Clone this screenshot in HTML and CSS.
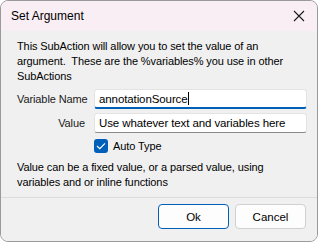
FILE: index.html
```html
<!DOCTYPE html>
<html lang="en">
<head>
    <meta charset="UTF-8">
    <meta name="viewport" content="width=device-width, initial-scale=1.0">
    <title>Set Argument</title>
    <link rel="stylesheet" href="styles.css">
</head>
<body>

    <div class="window">
        <div class="titlebar">
            <span class="title">Set Argument</span>
            <svg class="close" width="12" height="12" viewBox="0 0 12 12">
                <path d="M1 1 L11 11 M11 1 L1 11" stroke="#1a1a1a" stroke-width="1.1" fill="none"/>
            </svg>
        </div>

        <div class="content">
            <p class="intro">This SubAction will allow you to set the value of an argument.&nbsp; These are the %variables% you use in other SubActions</p>

            <div class="form">
                <label class="field-label" for="var-name">Variable Name</label>
                <div class="input focused">
                    <span id="var-name">annotationSource</span><span class="caret"></span>
                </div>

                <label class="field-label" for="var-value">Value</label>
                <div class="input">
                    <span id="var-value">Use whatever text and variables here</span>
                </div>

                <span></span>
                <div class="check-row">
                    <span class="checkbox">
                        <svg width="10" height="8" viewBox="0 0 10 8">
                            <path d="M1 4 L3.8 6.6 L9 1.3" stroke="#ffffff" stroke-width="1.2" fill="none"/>
                        </svg>
                    </span>
                    <span>Auto Type</span>
                </div>
            </div>

            <p class="note">Value can be a fixed value, or a parsed value, using variables and or inline functions</p>
        </div>

        <div class="footer">
            <button class="btn default">Ok</button>
            <button class="btn">Cancel</button>
        </div>
    </div>

</body>
</html>
```

FILE: styles.css
```css
* {
    box-sizing: border-box;
}

body {
    margin: 0;
    background-color: #ffffff;
    font-family: "Liberation Sans", Arial, sans-serif;
    font-size: 11px;
    letter-spacing: -0.1px;
    color: #000000;
}

.window {
    width: 318px;
    height: 242px;
    border: 1px solid #9a9a9a;
    border-radius: 8px;
    overflow: hidden;
    background-color: #f0f0f0;
    display: flex;
    flex-direction: column;
}

.titlebar {
    height: 30px;
    flex-shrink: 0;
    background-color: #f9eef4;
    display: flex;
    align-items: center;
    justify-content: space-between;
    padding: 0 12px 0 10px;
}

.title {
    font-size: 12px;
    letter-spacing: 0;
    color: #000000;
}

.content {
    padding: 8px 10px 0 16px;
    flex: 1;
}

.intro {
    margin: 0;
    line-height: 15px;
}

.form {
    display: grid;
    grid-template-columns: 68px 213px;
    column-gap: 9px;
    row-gap: 4px;
    align-items: center;
    margin-top: 5px;
}

.field-label {
    text-align: right;
    color: #1a1a1a;
    white-space: nowrap;
}

.input {
    height: 20px;
    background-color: #ffffff;
    border: 1px solid #e3e3e3;
    border-bottom-color: #8a8a8a;
    border-radius: 3px;
    padding: 0 4px;
    display: flex;
    align-items: center;
    white-space: nowrap;
    font-size: 11.5px;
}

.input.focused {
    border-bottom: 2px solid #005fb8;
}

.caret {
    display: inline-block;
    width: 1px;
    height: 13px;
    background-color: #000000;
}

.check-row {
    display: flex;
    align-items: center;
    gap: 5px;
    margin-top: 2px;
}

.checkbox {
    width: 14px;
    height: 14px;
    border-radius: 3px;
    background-color: #005fb8;
    display: flex;
    align-items: center;
    justify-content: center;
}

.note {
    margin: 7px 0 0;
    line-height: 15px;
}

.footer {
    height: 44px;
    flex-shrink: 0;
    border-top: 1px solid #dcdcdc;
    background-color: #f0f0f0;
    display: flex;
    justify-content: flex-end;
    align-items: center;
    gap: 6px;
    padding: 0 11px 6px 0;
}

.btn {
    width: 71px;
    height: 25px;
    font-family: inherit;
    font-size: 11.5px;
    color: #000000;
    background-color: #fdfdfd;
    border: 1px solid #d0d0d0;
    border-radius: 4px;
}

.btn.default {
    border-color: #005fb8;
}
```
